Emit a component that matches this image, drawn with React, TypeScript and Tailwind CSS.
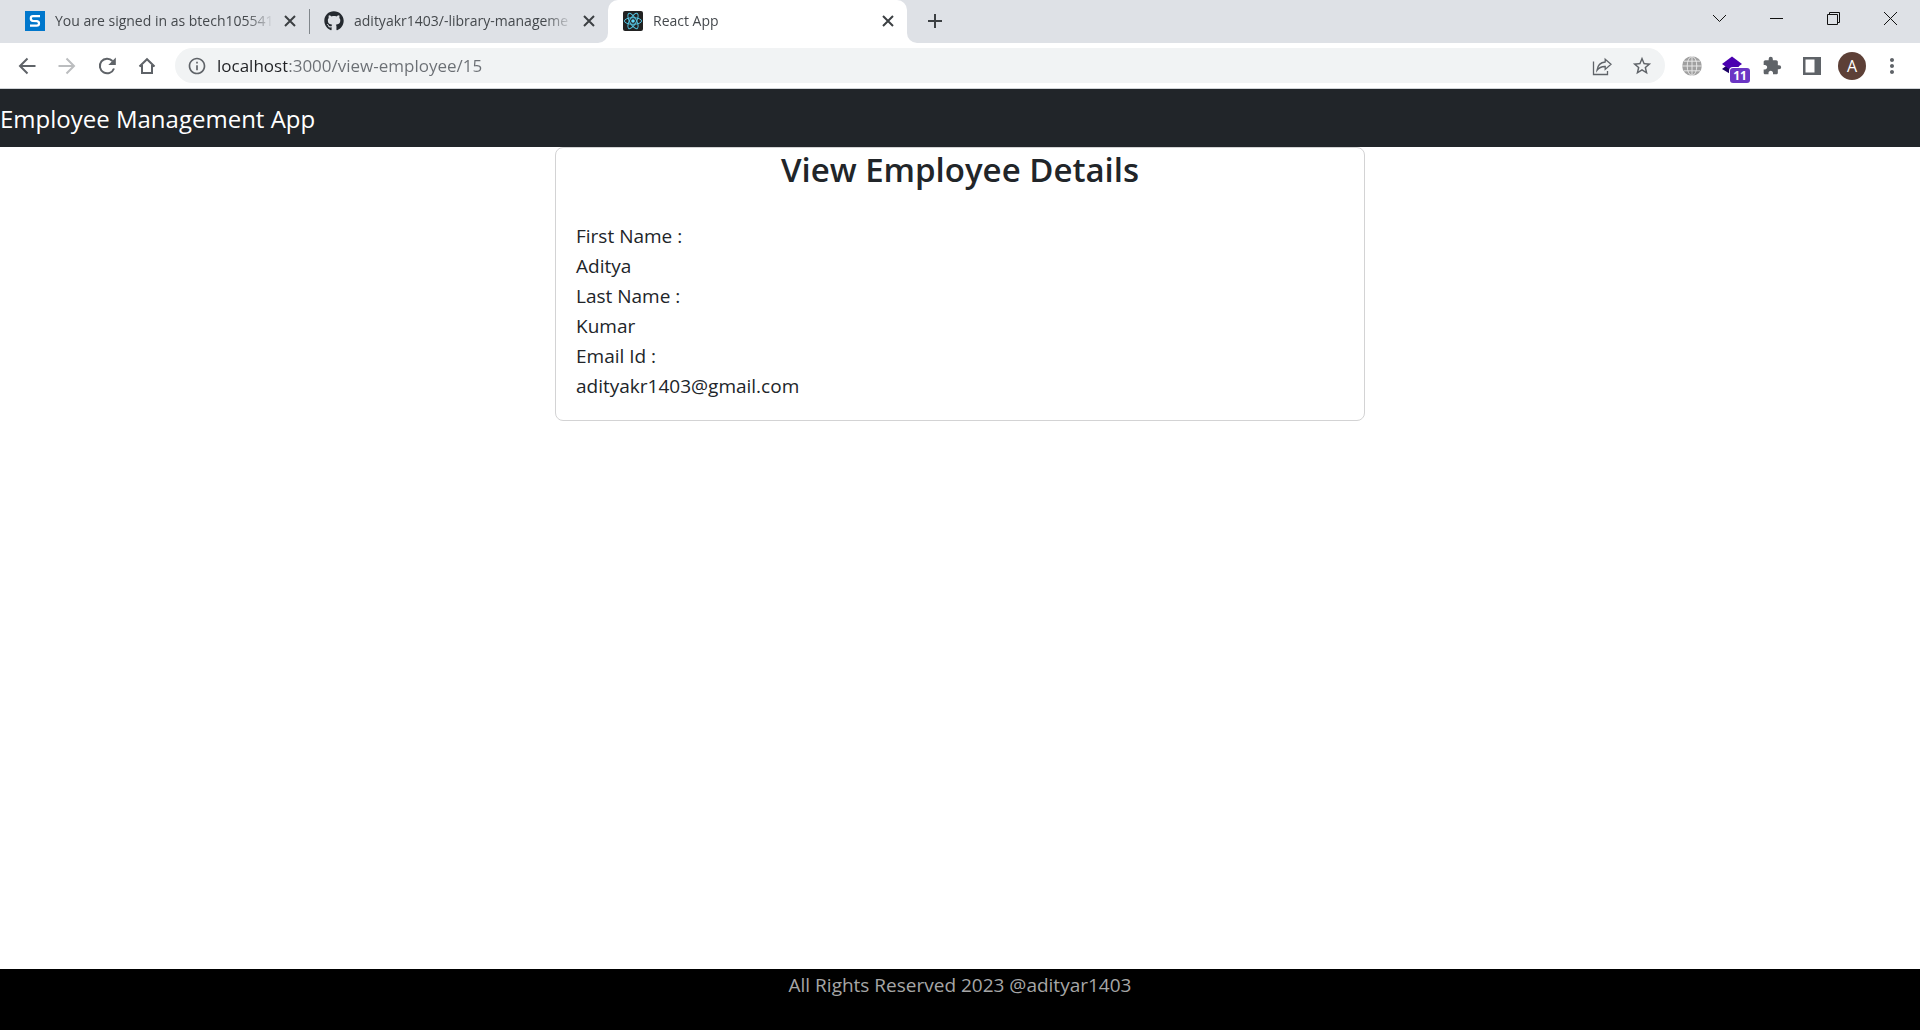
import type { ReactNode } from "react";
import { MdExtension, MdInfoOutline, MdMoreVert, MdStarBorder } from "react-icons/md";
import { FaGithub } from "react-icons/fa";

const employee = {
  firstName: "Aditya",
  lastName: "Kumar",
  email: "adityakr1403@gmail.com",
};

function SiteIcon() {
  return (
    <svg viewBox="0 0 20 20" className="size-5 shrink-0" aria-hidden="true">
      <rect width="20" height="20" fill="#0077cc" />
      <path
        d="M15 5.2H8Q5.8 5.2 5.8 7.4Q5.8 9.6 8 9.9L12 10.2Q14 10.5 14 12.5Q14 14.7 11.8 14.7H5"
        fill="none"
        stroke="#fff"
        strokeWidth="2.2"
      />
    </svg>
  );
}

function ReactIcon() {
  return (
    <svg viewBox="0 0 20 20" className="size-5 shrink-0" aria-hidden="true">
      <rect width="20" height="20" rx="2" fill="#222" />
      <g fill="none" stroke="#53c1de" strokeWidth="1">
        <ellipse cx="10" cy="10" rx="8.6" ry="3.3" />
        <ellipse cx="10" cy="10" rx="8.6" ry="3.3" transform="rotate(60 10 10)" />
        <ellipse cx="10" cy="10" rx="8.6" ry="3.3" transform="rotate(120 10 10)" />
      </g>
      <circle cx="10" cy="10" r="1.8" fill="#61dafb" />
    </svg>
  );
}

function CloseIcon() {
  return (
    <svg viewBox="0 0 20 20" className="size-5" fill="none" stroke="#3c4043" strokeWidth="2" aria-hidden="true">
      <path d="M5 5l10 10M15 5L5 15" />
    </svg>
  );
}

function Tab({ icon, title, active = false }: { icon: ReactNode; title: string; active?: boolean }) {
  return (
    <div
      className={
        active
          ? "relative flex h-full w-[299px] items-center rounded-t-[10px] bg-white pr-[9px] pb-px pl-[15px]"
          : "flex h-full w-[299px] items-center pr-[9px] pb-px pl-[15px]"
      }
    >
      {active && (
        <>
          <span className="absolute bottom-0 -left-2.5 size-2.5 bg-white">
            <span className="block size-full rounded-br-[10px] bg-[#dee1e6]" />
          </span>
          <span className="absolute -right-2.5 bottom-0 size-2.5 bg-white">
            <span className="block size-full rounded-bl-[10px] bg-[#dee1e6]" />
          </span>
        </>
      )}
      {icon}
      <span className="ml-2.5 flex-1 overflow-hidden text-sm whitespace-nowrap text-[#45494d] [mask-image:linear-gradient(to_right,black_calc(100%-28px),transparent)]">
        {title}
      </span>
      <button type="button" aria-label={`Close ${title}`} className="ml-1.5 size-5">
        <CloseIcon />
      </button>
    </div>
  );
}

function TabStrip() {
  return (
    <div className="flex h-[43px] bg-[#dee1e6] pl-2.5">
      <Tab icon={<SiteIcon />} title="You are signed in as btech105541" />
      <div className="-mr-px h-[25px] w-px self-center bg-[#80868b]" />
      <Tab icon={<FaGithub className="size-5 shrink-0 text-[#24292f]" />} title="adityakr1403/-library-manageme" />
      <Tab active icon={<ReactIcon />} title="React App" />
      <button type="button" aria-label="New tab" className="ml-[13px] flex w-[30px] items-center justify-center pb-px">
        <svg viewBox="0 0 16 16" className="size-4" fill="none" stroke="#3c4043" strokeWidth="2" aria-hidden="true">
          <path d="M8 1v14M1 8h14" />
        </svg>
      </button>
      <div className="ml-auto flex h-[37px] pr-px">
        <WindowButton label="Search tabs">
          <path d="M2 5l6.5 6.5L15 5" />
        </WindowButton>
        <WindowButton label="Minimize">
          <path d="M2 8.5h13" />
        </WindowButton>
        <WindowButton label="Restore">
          <path d="M2.5 4.5h10v10h-10zM4.500 4.500v-2h10v10h-2" />
        </WindowButton>
        <WindowButton label="Close window">
          <path d="M2 2l13 13M15 2L2 15" />
        </WindowButton>
      </div>
    </div>
  );
}

function WindowButton({ label, children }: { label: string; children: ReactNode }) {
  return (
    <button type="button" aria-label={label} className="flex w-[57px] items-center justify-center">
      <svg viewBox="0 0 17 17" className="size-[17px]" fill="none" stroke="#111" strokeWidth="1" aria-hidden="true">
        {children}
      </svg>
    </button>
  );
}

function ToolButton({ label, children }: { label: string; children: ReactNode }) {
  return (
    <button type="button" aria-label={label} className="flex h-9 w-10 items-center justify-center text-[#5f6368]">
      {children}
    </button>
  );
}

function NavIcon({ children, dim = false }: { children: ReactNode; dim?: boolean }) {
  return (
    <svg
      viewBox="0 0 20 20"
      className={dim ? "size-5 text-[#bbbdbf]" : "size-5"}
      fill="none"
      stroke="currentColor"
      strokeWidth="2"
      aria-hidden="true"
    >
      {children}
    </svg>
  );
}

function Toolbar() {
  return (
    <div className="flex h-[46px] items-center border-b border-[#d0d3d7] bg-white px-2">
      <div className="-ml-px flex">
        <ToolButton label="Back">
          <NavIcon>
            <path d="M18.500 10H3.500M10.500 2.500L3 10l7.500 7.500" />
          </NavIcon>
        </ToolButton>
        <ToolButton label="Forward">
          <NavIcon dim>
            <path d="M1.500 10h15M9.500 2.500L17 10l-7.500 7.500" />
          </NavIcon>
        </ToolButton>
        <ToolButton label="Reload">
          <NavIcon>
            <path d="M17 12.500A7.300 7.300 0 1 1 15.500 5" />
            <path d="M18.800 1.500v7.500h-7.500z" fill="currentColor" stroke="none" />
          </NavIcon>
        </ToolButton>
        <ToolButton label="Home">
          <NavIcon>
            <path d="M5 9v8h10V9M2.500 10.500L10 3.200l7.500 7.300M2.500 10h3M14.500 10h3" />
          </NavIcon>
        </ToolButton>
      </div>
      <form className="ml-2 flex h-[35px] flex-1 items-center rounded-full bg-[#f1f3f4] pr-[3px] pl-3">
        <MdInfoOutline className="size-5 shrink-0 text-[#5f6368]" />
        <input
          aria-label="Address"
          defaultValue="localhost:3000/view-employee/15"
          className="ml-2.5 min-w-0 flex-1 bg-linear-to-r from-[#202124] from-[70px] to-[#6b6f74] to-[70px] bg-clip-text text-[17px] text-transparent outline-none"
        />
        <ToolButton label="Share">
          <svg viewBox="0 0 20 20" className="size-5" fill="none" stroke="currentColor" strokeWidth="1.3" aria-hidden="true">
            <path d="M1.500 5.500v13h14v-3.500" />
            <path d="M13.200 3.200L19 8.300L13.200 13.400V10.500Q8 10.300 5 14.300Q6 6.500 13.200 6Z" />
          </svg>
        </ToolButton>
        <ToolButton label="Bookmark">
          <MdStarBorder className="size-[22px]" />
        </ToolButton>
      </form>
      <div className="ml-[7px] flex">
        <ToolButton label="Web extension">
          <svg viewBox="0 0 20 20" className="size-5" aria-hidden="true">
            <circle cx="10" cy="10" r="9.800" fill="#a0a0a0" />
            <g fill="none" stroke="#ececec" strokeWidth="0.900">
              <ellipse cx="10" cy="10" rx="4.800" ry="9.500" />
              <path d="M10 0v20M0 10h20M2 5.200h16M2 14.800h16" />
            </g>
          </svg>
        </ToolButton>
        <ToolButton label="Layers extension, 11 items">
          <span className="relative">
            <svg viewBox="0 0 20 20" className="size-5" aria-hidden="true">
              <path d="M0 13l4-3 6 4 6-4 4 3-10 6z" fill="#1c0066" />
              <path d="M10 0.500L20 8 10 15 0 8z" fill="#4a00b0" />
            </svg>
            <span className="absolute top-3 left-2 h-[15px] w-5 rounded-[3px] bg-[#6b36c4] text-center text-xs leading-[15px] font-bold text-white ring-1 ring-white">
              11
            </span>
          </span>
        </ToolButton>
        <ToolButton label="Extensions">
          <MdExtension className="size-5" />
        </ToolButton>
        <ToolButton label="Side panel">
          <svg viewBox="0 0 18 18" className="size-[18px]" aria-hidden="true">
            <path d="M0 0h18v18H0zM2.500 2.500v13h9v-13z" fill="currentColor" fillRule="evenodd" />
          </svg>
        </ToolButton>
        <ToolButton label="Profile">
          <span className="size-7 rounded-full bg-[#5d4037] text-base leading-7 text-white">A</span>
        </ToolButton>
        <ToolButton label="Menu">
          <MdMoreVert className="size-6" />
        </ToolButton>
      </div>
    </div>
  );
}

function Field({ label, value }: { label: string; value: string }) {
  return (
    <div>
      <dt>{label}</dt>
      <dd>{value}</dd>
    </div>
  );
}

export default function App() {
  return (
    <div className="flex min-h-screen flex-col bg-white font-['Open_Sans','Noto_Sans',sans-serif] text-[#212529]">
      <TabStrip />
      <Toolbar />
      <header className="flex h-[58px] items-center bg-[#212529] pt-0.5">
        <a href="#" className="text-2xl text-white">
          Employee Management App
        </a>
      </header>
      <main className="mx-auto w-full max-w-[1620px] flex-1">
        <section className="mx-auto w-1/2 rounded-lg border border-[#d3d3d4]">
          <h1 className="mb-2 text-center text-[33px] leading-[44px] font-semibold">View Employee Details</h1>
          <dl className="px-5 pt-[21px] pb-[19px] text-[19px] leading-[30px]">
            <Field label="First Name :" value={employee.firstName} />
            <Field label="Last Name :" value={employee.lastName} />
            <Field label="Email Id :" value={employee.email} />
          </dl>
        </section>
      </main>
      <footer className="h-[61px] bg-black text-center text-[19px] leading-[33px] text-[#a6a6a6]">
        All Rights Reserved 2023 @adityar1403
      </footer>
    </div>
  );
}
